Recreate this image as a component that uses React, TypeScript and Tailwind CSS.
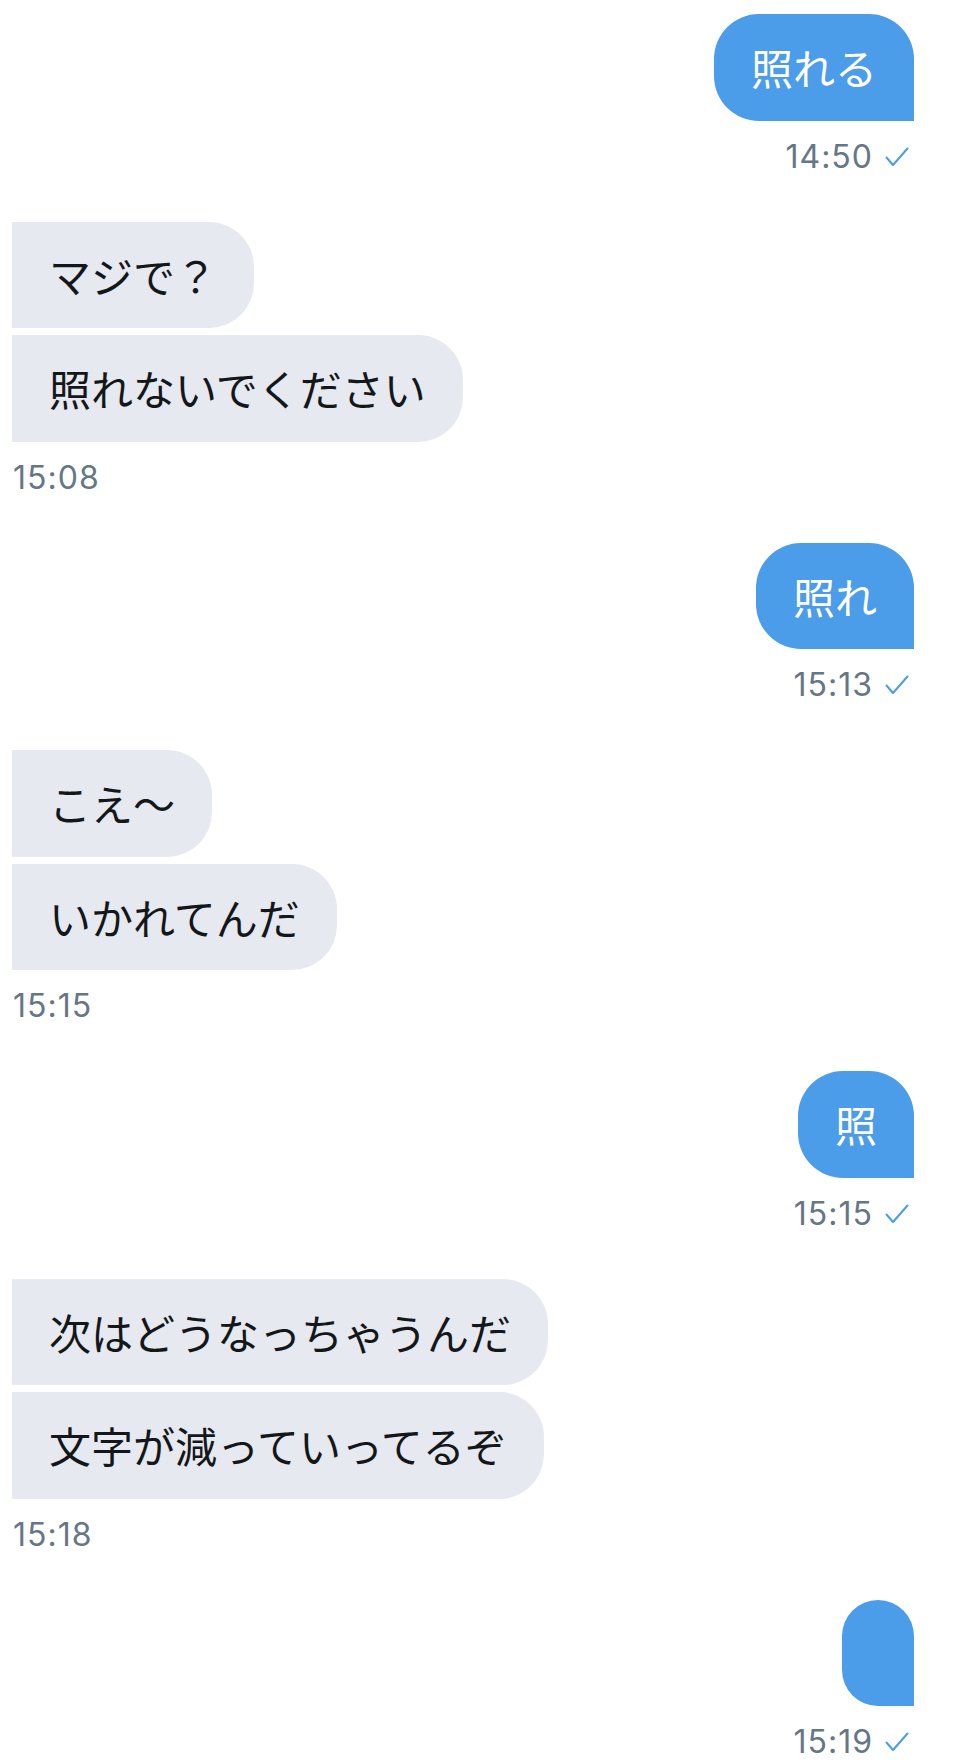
import React from "react";

type Group = { side: "sent" | "recv"; bubbles: string[]; time: string };

const groups: Group[] = [
  { side: "sent", bubbles: ["照れる"], time: "14:50" },
  { side: "recv", bubbles: ["マジで？", "照れないでください"], time: "15:08" },
  { side: "sent", bubbles: ["照れ"], time: "15:13" },
  { side: "recv", bubbles: ["こえ〜", "いかれてんだ"], time: "15:15" },
  { side: "sent", bubbles: ["照"], time: "15:15" },
  { side: "recv", bubbles: ["次はどうなっちゃうんだ", "文字が減っていってるぞ"], time: "15:18" },
  { side: "sent", bubbles: [""], time: "15:19" },
];

function Check() {
  return (
    <svg width="24" height="20" viewBox="0 0 24 20" fill="none" className="shrink-0">
      <polyline
        points="1.5,10.5 8,18 22.5,1.5"
        stroke="#4b9ce9"
        strokeWidth="2"
        strokeLinecap="round"
        strokeLinejoin="round"
      />
    </svg>
  );
}

function Bubble({ text, side }: { text: string; side: "sent" | "recv" }) {
  const base =
    "h-[106.5px] flex items-center text-[42px] leading-[48px] whitespace-nowrap";
  const jp = { fontFamily: "'Noto Sans CJK JP', 'Noto Sans', sans-serif" };
  if (side === "sent") {
    return (
      <div
        className={`${base} bg-[#4b9ce9] text-white rounded-tl-[45px] rounded-tr-[45px] rounded-bl-[45px] ${
          text === "" ? "w-[72px]" : "px-[37px]"
        }`}
        style={jp}
      >
        {text}
      </div>
    );
  }
  return (
    <div
      className={`${base} bg-[#e6e9ef] text-[#14171a] rounded-tr-[45px] rounded-br-[45px] px-[37px]`}
      style={jp}
    >
      {text}
    </div>
  );
}

export default function App() {
  return (
    <div className="w-[962px] min-h-[1762px] bg-white pt-[14px] pl-[12px] pr-[48px] font-['Inter',sans-serif]">
      {groups.map((g, i) => (
        <div
          key={i}
          className={`flex flex-col ${g.side === "sent" ? "items-end" : "items-start"} ${
            i < groups.length - 1 ? "mb-[50px]" : ""
          }`}
        >
          <div className={`flex flex-col gap-[7px] ${g.side === "sent" ? "items-end" : "items-start"}`}>
            {g.bubbles.map((b, j) => (
              <Bubble key={j} text={b} side={g.side} />
            ))}
          </div>
          <div
            className={`mt-[21px] h-[30px] flex items-center gap-[12px] text-[32px] leading-[30px] tracking-[1px] text-[#657786] ${
              g.side === "sent" ? "pr-[5px]" : "pl-[1px]"
            }`}
          >
            <span>{g.time}</span>
            {g.side === "sent" && <Check />}
          </div>
        </div>
      ))}
    </div>
  );
}
